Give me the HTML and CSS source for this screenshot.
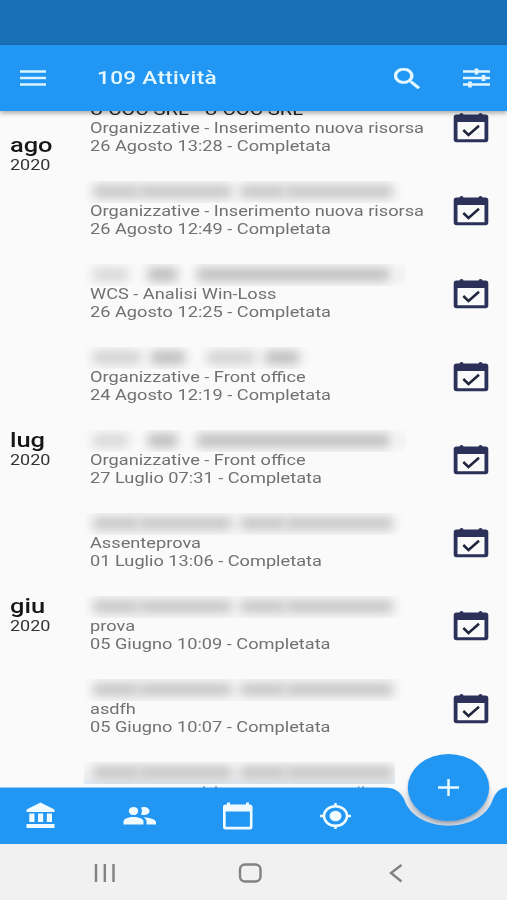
FILE: index.html
```
<!DOCTYPE html>
<html lang="it">
<head>
<meta charset="utf-8">
<title>Attività</title>
<link rel="stylesheet" href="styles.css">
</head>
<body>
<svg class="defs" width="0" height="0">
  <symbol id="event" viewBox="0 0 36 32" preserveAspectRatio="none">
    <path fill="#2b3158" fill-rule="evenodd" d="M6.500 2.500q0-1.500 2-1.500t2 1.500h15q0-1.500 2-1.500t2 1.500h3Q35.300 2.500 35.300 5.300V27.500Q35.300 30.300 32.500 30.300H3.500Q.7 30.300 .7 27.500V5.300Q.7 2.500 3.500 2.500zM4.500 10v17.300h27V10z"/>
    <path fill="none" stroke="#20243c" stroke-width="2.500" d="M10.300 18l5.200 5L26 13.800"/>
  </symbol>
</svg>
<div class="screen">
  <div class="status"></div>
  <header class="bar">
    <svg class="menu" viewBox="0 0 26 16"><path d="M0 1.500h26M0 8h26M0 14.500h26" stroke="#d9f3ff" stroke-width="2.500"/></svg>
    <h1><span>109 Attività</span></h1>
    <svg class="search" viewBox="3 3 17.500 17.500" preserveAspectRatio="none"><path fill="#e6f8ff" stroke="#e6f8ff" stroke-width=".35" d="M15.500 14h-.79l-.28-.27C15.410 12.590 16 11.110 16 9.500 16 5.910 13.090 3 9.500 3S3 5.910 3 9.500 5.910 16 9.500 16c1.610 0 3.090-.59 4.230-1.570l.27.28v.79l5 4.990L20.490 19l-4.990-5zm-6 0C7.010 14 5 11.990 5 9.500S7.010 5 9.500 5 14 7.010 14 9.500 11.990 14 9.500 14z"/></svg>
    <svg class="tune" viewBox="0 0 27 20"><path d="M0 3.500h27M0 10h27M0 16.500h27" stroke="#e0f6ff" stroke-width="2.600"/><path d="M13.500 .5v6M20.500 7v6M7 13.500v6" stroke="#e0f6ff" stroke-width="3.600"/></svg>
  </header>
  <main class="list">
    <section class="group first">
      <div class="month"><b>ago</b><span>2020</span></div>
      <div class="items">
        <article><div class="title"><span>U COC SRL - U COC SRL</span></div><p>Organizzative - Inserimento nuova risorsa</p><p>26 Agosto 13:28 - Completata</p><svg class="ev"><use href="#event"/></svg></article>
        <article><div class="hidden a"><i></i><i></i><i></i><i></i></div><p>Organizzative - Inserimento nuova risorsa</p><p>26 Agosto 12:49 - Completata</p><svg class="ev"><use href="#event"/></svg></article>
        <article><div class="hidden b"><i></i><i></i><i></i><i></i></div><p>WCS - Analisi Win-Loss</p><p>26 Agosto 12:25 - Completata</p><svg class="ev"><use href="#event"/></svg></article>
        <article><div class="hidden c"><i></i><i></i><i></i><i></i></div><p>Organizzative - Front office</p><p>24 Agosto 12:19 - Completata</p><svg class="ev"><use href="#event"/></svg></article>
      </div>
    </section>
    <section class="group">
      <div class="month"><b>lug</b><span>2020</span></div>
      <div class="items">
        <article><div class="hidden b"><i></i><i></i><i></i><i></i></div><p>Organizzative - Front office</p><p>27 Luglio 07:31 - Completata</p><svg class="ev"><use href="#event"/></svg></article>
        <article><div class="hidden a"><i></i><i></i><i></i><i></i></div><p>Assenteprova</p><p>01 Luglio 13:06 - Completata</p><svg class="ev"><use href="#event"/></svg></article>
      </div>
    </section>
    <section class="group">
      <div class="month"><b>giu</b><span>2020</span></div>
      <div class="items">
        <article><div class="hidden a"><i></i><i></i><i></i><i></i></div><p>prova</p><p>05 Giugno 10:09 - Completata</p><svg class="ev"><use href="#event"/></svg></article>
        <article><div class="hidden a"><i></i><i></i><i></i><i></i></div><p>asdfh</p><p>05 Giugno 10:07 - Completata</p><svg class="ev"><use href="#event"/></svg></article>
        <article><div class="hidden a last"><i></i><i></i><i></i><i></i></div></article>
      </div>
    </section>
  </main>
  <nav class="tabs">
    <svg viewBox="0 0 507 100">
      <defs>
        <filter id="sh" x="-20%" y="-20%" width="140%" height="150%"><feDropShadow dx="0" dy="2" stdDeviation="1.800" flood-color="#334" flood-opacity=".35"/></filter>
        <linearGradient id="gap" x1="0" y1="0" x2="0" y2="1"><stop offset="0" stop-color="#fafafa"/><stop offset=".5" stop-color="#d3dae3"/><stop offset="1" stop-color="#c6cfdb"/></linearGradient>
      </defs>
      <path fill="url(#gap)" d="M395 37.500H507V60L490 80H410z"/>
      <path fill="#2196f3" d="M0 37.500H383C396 37.500 400 42 404 49C415 84.500 482 84.500 493 49C496 42 500 38 507 37.500V94.500H0z"/>
      <path stroke="#2d6ba6" stroke-width="1" d="M203 37h2M215 37h2M358 37h1.500M362 37h2"/>
      <ellipse cx="448.500" cy="37.500" rx="40.700" ry="33.500" fill="#2196f3" filter="url(#sh)"/>
      <path d="M438 37.500h21M448.500 29v17" stroke="#e8faff" stroke-width="2.500"/>
      <g fill="#effbff">
        <path d="M26.500 59.500L40.500 52.500l14 7V62h-28zM29.300 63.500h5.200v8.500h-5.200zM38 63.500h5.200v8.500H38zM46.800 63.500H52v8.500h-5.200zM26.500 74h28v4h-28z"/>
        <ellipse cx="133.500" cy="61" rx="4.700" ry="4.100"/><path d="M123.500 74.500v-3c0-6 20-6 20 0v3z"/>
        <path d="M141 57.500c3-1.500 8.500 0 8.500 3.500s-5.500 5-8.500 3.500c1.300-2 1.300-5 0-7zM143.500 67.200c6 .3 12.500 2 12.500 5v2.300h-9.500v-3c0-1.700-1.200-3.200-3-4.300z"/>
        <path fill-rule="evenodd" d="M227 52.500h3v2h16v-2h3v2h1q2.500 0 2.500 2.500v20q0 2.500-2.500 2.500h-24.500q-2.500 0-2.500-2.500V57q0-2.500 2.500-2.500h1.500zM225.700 61.500v15.300h24.200V61.500z"/>
        <ellipse cx="335.500" cy="66" rx="6" ry="5.200"/>
      </g>
      <g fill="none" stroke="#effbff" stroke-width="2.500"><ellipse cx="335.500" cy="66" rx="11.500" ry="9.800"/><path d="M335.500 53v4M335.500 75v4M320 66h5M346 66h5"/></g>
    </svg>
  </nav>
  <footer class="system">
    <svg viewBox="0 0 507 56" fill="none" stroke="#828282" stroke-width="2.400"><path d="M96 20v18M104.800 20v18M113.500 20v18"/><rect x="240" y="20.500" width="20.500" height="17" rx="5"/><path d="M401.500 21l-10.500 8 10.500 8.500"/></svg>
  </footer>
</div>
</body>
</html>
```
FILE: styles.css
```
* { box-sizing: border-box; }
body { margin: 0; font-family: Roboto, "Liberation Sans", sans-serif; background: #fafafa; }
.defs { position: absolute; }
.screen { width: 507px; height: 900px; display: flex; flex-direction: column; overflow: hidden; background: #fafafa; }
.status { height: 45px; background: #1a70b8; flex: none; }
.bar { height: 66px; flex: none; display: flex; align-items: center; background: #2196f3; padding: 0 17px 0 20px; box-shadow: 0 2px 5px rgba(0,0,0,.35); position: relative; z-index: 2; }
.bar svg { flex: none; display: block; }
.menu { width: 26px; height: 16px; }
.bar h1 { margin: 0 0 0 50.500px; flex: 1; font-size: 18.500px; line-height: 24px; font-weight: 500; color: #e4f7ff; }
.bar h1 span { display: inline-block; transform: scaleX(1.22); transform-origin: left; letter-spacing: .25px; }
.search { width: 26px; height: 21px; margin-right: 43px; }
.tune { width: 27px; height: 20px; }
.list { flex: 1; min-height: 0; overflow: hidden; }
.group { display: flex; padding-left: 10px; }
.group.first { margin-top: -13px; }
.month { width: 80px; flex: none; display: flex; flex-direction: column; color: #161616; }
.first .month { padding-top: 37px; }
.month b { font-size: 20.500px; font-weight: 500; line-height: 20px; height: 21px; transform: scaleX(1.24); transform-origin: left; margin-left: -.5px; }
.month span { font-size: 15px; line-height: 19.500px; color: #333; transform: scaleX(1.2); transform-origin: left; }
.items { flex: 1; }
article { height: 83px; display: grid; grid-template: 22px 18px 17px / 355px 1fr; }
article p { grid-column: 1; margin: 0; font-size: 15px; line-height: 17.500px; color: #717171; white-space: nowrap; transform: scaleX(1.213); transform-origin: left; justify-self: start; }
.title { font-size: 17px; line-height: 22px; color: #222; white-space: nowrap; }
.title span { display: inline-block; transform: scaleX(1.19); transform-origin: left; }
.ev { grid-column: 2; grid-row: 1 / 4; width: 36px; height: 32px; margin: 14px 0 0 8px; }
.hidden { display: flex; align-items: center; height: 22px; margin-left: -6px; padding: 0 0 2px 9px; width: 322px; overflow: hidden; }
.hidden i { height: 13px; background: #c4c4c4; filter: blur(5.500px); flex: none; }
.a i:nth-child(1) { width: 46px; }
.a i:nth-child(2) { width: 93px; margin-right: 8px; }
.a i:nth-child(3) { width: 46px; }
.a i:nth-child(4) { width: 107px; }
.b i:nth-child(1) { width: 35px; margin-right: 20px; background: #d6d6d6; }
.b i:nth-child(2) { width: 29px; margin-right: 20px; background: #b8b8b8; }
.b i:nth-child(3) { width: 193px; background: #bcbcbc; }
.b i:nth-child(4) { width: 8px; margin-left: 6px; background: #e8e8e8; }
.c i:nth-child(1), .c i:nth-child(3) { width: 48px; margin-right: 10px; background: #d0d0d0; }
.c i:nth-child(2) { width: 34px; margin-right: 22px; background: #bababa; }
.c i:nth-child(4) { width: 34px; background: #bababa; }
.last { background: linear-gradient(#fafafa, #f1f1f1 70%, #dce8f2); width: 311px; }
.tabs { height: 94px; margin-top: -38px; flex: none; position: relative; z-index: 1; }
.tabs svg { display: block; width: 507px; height: 100px; }
.system { height: 56px; flex: none; background: #f1f1f1; position: relative; z-index: 2; }
.system svg { display: block; width: 507px; height: 56px; }
```
